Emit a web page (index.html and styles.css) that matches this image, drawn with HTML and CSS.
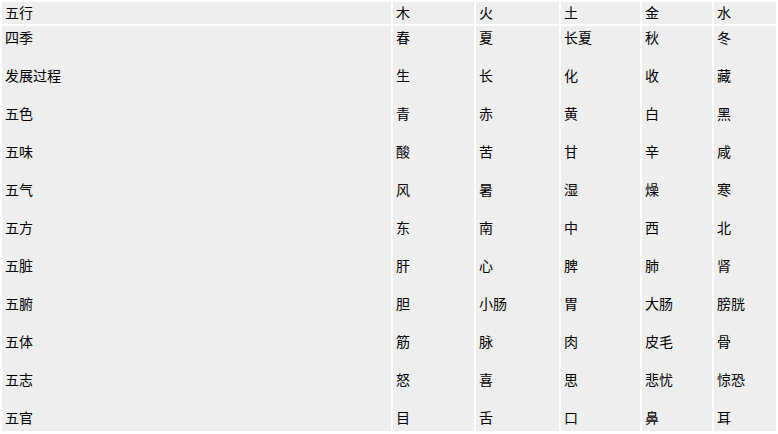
FILE: index.html
```html
<!DOCTYPE html>
<html lang="zh">
<head>
<meta charset="utf-8">
<title>五行</title>
<link rel="stylesheet" href="styles.css">
</head>
<body>
<table class="wx">
  <colgroup>
    <col class="c1"><col class="c2"><col class="c3"><col class="c4"><col class="c5"><col class="c6">
  </colgroup>
  <thead>
    <tr>
      <th>五行</th><th>木</th><th>火</th><th>土</th><th>金</th><th>水</th>
    </tr>
  </thead>
  <tbody>
    <tr>
      <td><div class="list"><span>四季</span><span>发展过程</span><span>五色</span><span>五味</span><span>五气</span><span>五方</span><span>五脏</span><span>五腑</span><span>五体</span><span>五志</span><span>五官</span></div></td>
      <td><div class="list"><span>春</span><span>生</span><span>青</span><span>酸</span><span>风</span><span>东</span><span>肝</span><span>胆</span><span>筋</span><span>怒</span><span>目</span></div></td>
      <td><div class="list"><span>夏</span><span>长</span><span>赤</span><span>苦</span><span>暑</span><span>南</span><span>心</span><span>小肠</span><span>脉</span><span>喜</span><span>舌</span></div></td>
      <td><div class="list"><span>长夏</span><span>化</span><span>黄</span><span>甘</span><span>湿</span><span>中</span><span>脾</span><span>胃</span><span>肉</span><span>思</span><span>口</span></div></td>
      <td><div class="list"><span>秋</span><span>收</span><span>白</span><span>辛</span><span>燥</span><span>西</span><span>肺</span><span>大肠</span><span>皮毛</span><span>悲忧</span><span>鼻</span></div></td>
      <td><div class="list"><span>冬</span><span>藏</span><span>黑</span><span>咸</span><span>寒</span><span>北</span><span>肾</span><span>膀胱</span><span>骨</span><span>惊恐</span><span>耳</span></div></td>
    </tr>
  </tbody>
</table>
</body>
</html>
```
FILE: styles.css
```css
html, body {
  margin: 0;
  padding: 0;
  background: #ffffff;
}
body {
  font-family: "Noto Sans CJK SC", "Noto Sans", sans-serif;
  font-size: 14px;
  color: #000000;
}
.wx {
  width: 778px;
  border-collapse: separate;
  border-spacing: 2px;
  table-layout: fixed;
}
.c1 { width: 389px; }
.c2 { width: 81px; }
.c3 { width: 83px; }
.c4 { width: 79px; }
.c5 { width: 70px; }
.c6 { width: 62px; }
.wx th,
.wx td {
  background: #eeeeee;
  text-align: left;
  vertical-align: top;
  font-weight: normal;
  padding: 2px 3px 4px;
}
.wx th {
  line-height: 16px;
}
.wx td {
  padding-top: 2px;
  padding-bottom: 4px;
}
.list {
  display: flex;
  flex-direction: column;
  gap: 19px;
  line-height: 19px;
}
.list span {
  display: block;
  white-space: nowrap;
}
```
